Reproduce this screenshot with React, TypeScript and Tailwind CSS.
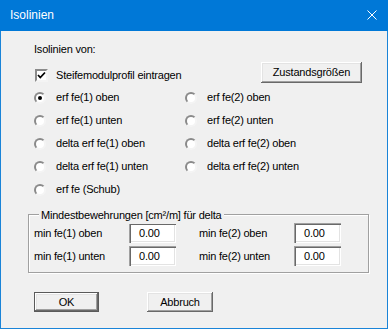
import React from 'react';

const raised =
  'shadow-[inset_-1px_-1px_0_#696969,inset_1px_1px_0_#ffffff,inset_-2px_-2px_0_#a0a0a0,inset_2px_2px_0_#e3e3e3]';
const sunken =
  'shadow-[inset_1px_1px_0_#a0a0a0,inset_2px_2px_0_#696969,inset_-1px_-1px_0_#ffffff,inset_-2px_-2px_0_#e3e3e3]';

function Radio({ label, checked = false }: { label: string; checked?: boolean }) {
  return (
    <div className="flex items-center gap-[10px]">
      <div className="w-[12px] h-[12px] rounded-full bg-white border-2 border-t-[#8a8a8a] border-l-[#8a8a8a] border-r-[#f4f4f4] border-b-[#f4f4f4] flex items-center justify-center">
        {checked && <div className="w-[4px] h-[4px] rounded-full bg-black" />}
      </div>
      <span>{label}</span>
    </div>
  );
}

function Field({ label }: { label: string }) {
  return (
    <div className="flex items-center">
      <span className="w-[95px]">{label}</span>
      <div className={`w-[47px] h-[20px] bg-white flex items-center pl-[10px] ${sunken}`}>0.00</div>
    </div>
  );
}

export default function App() {
  const rows: [string, string][] = [
    ['erf fe(1) oben', 'erf fe(2) oben'],
    ['erf fe(1) unten', 'erf fe(2) unten'],
    ['delta erf fe(1) oben', 'delta erf fe(2) oben'],
    ['delta erf fe(1) unten', 'delta erf fe(2) unten'],
    ['erf fe (Schub)', ''],
  ];

  return (
    <div className="w-[388px] h-[329px] bg-[#1a84d8] flex flex-col">
      {/* Titelleiste */}
      <div className="h-[31px] bg-[#0078d7] flex items-center pl-[10px] text-white text-[12px] font-['Liberation_Sans',sans-serif]">
        <span className="pb-[1px]">Isolinien</span>
        <svg className="ml-auto mr-[11px] mb-[1px]" width="10" height="10" viewBox="0 0 10 10">
          <path d="M0.5 0.5 L9.5 9.5 M9.5 0.5 L0.5 9.5" stroke="#fff" strokeWidth="1" />
        </svg>
      </div>

      {/* Inhalt */}
      <div className="flex-1 mx-[1px] mb-[1px] bg-[#f0f0f0] pl-[33px] flex flex-col text-black text-[11px] tracking-[-0.2px] font-['Liberation_Sans',sans-serif]">
        <div className="mt-[7px] h-[22px] flex items-center">Isolinien von:</div>

        <div className="mt-[2px] h-[21px] flex items-center">
          <div className="mt-[6px] ml-[1px] flex items-center gap-[8px]">
            <div className="w-[13px] h-[13px] bg-white border-2 border-t-[#8a8a8a] border-l-[#8a8a8a] border-r-[#f4f4f4] border-b-[#f4f4f4] flex items-center justify-center">
              <svg width="9" height="9" viewBox="0 0 9 9">
                <path d="M1 4 L3.3 6.5 L8 1.5" stroke="#000" strokeWidth="1.8" fill="none" />
              </svg>
            </div>
            <span>Steifemodulprofil eintragen</span>
          </div>
          <button className={`ml-auto mr-[25px] w-[101px] h-[21px] bg-[#f0f0f0] ${raised}`}>
            Zustandsgrößen
          </button>
        </div>

        <div className="mt-[3px] grid grid-cols-[151px_1fr]">
          {rows.map(([a, b], i) => (
            <React.Fragment key={i}>
              <div className="h-[23px] flex items-center">
                <Radio label={a} checked={i === 0} />
              </div>
              <div className="h-[23px] flex items-center">{b && <Radio label={b} />}</div>
            </React.Fragment>
          ))}
        </div>

        {/* Gruppe Mindestbewehrungen */}
        <div className="relative mt-[13px] ml-[-6px] w-[341px] border border-[#a0a0a0] shadow-[inset_1px_1px_0_#ffffff,1px_1px_0_#ffffff] pl-[5px] pt-[8px] pb-[6px] flex flex-col gap-[3px]">
          <span className="absolute left-[10px] top-[-8px] px-[2px] bg-[#f0f0f0]">
            Mindestbewehrungen [cm²/m] für delta
          </span>
          <div className="flex">
            <Field label="min fe(1) oben" />
            <div className="ml-[23px]">
              <Field label="min fe(2) oben" />
            </div>
          </div>
          <div className="flex">
            <Field label="min fe(1) unten" />
            <div className="ml-[23px]">
              <Field label="min fe(2) unten" />
            </div>
          </div>
        </div>

        <div className="mt-[19px] flex">
          <button className={`w-[65px] h-[20px] bg-[#f0f0f0] border border-[#5a5a5a] ${raised}`}>OK</button>
          <button className={`ml-[48px] w-[66px] h-[20px] bg-[#f0f0f0] ${raised}`}>Abbruch</button>
        </div>
      </div>
    </div>
  );
}
